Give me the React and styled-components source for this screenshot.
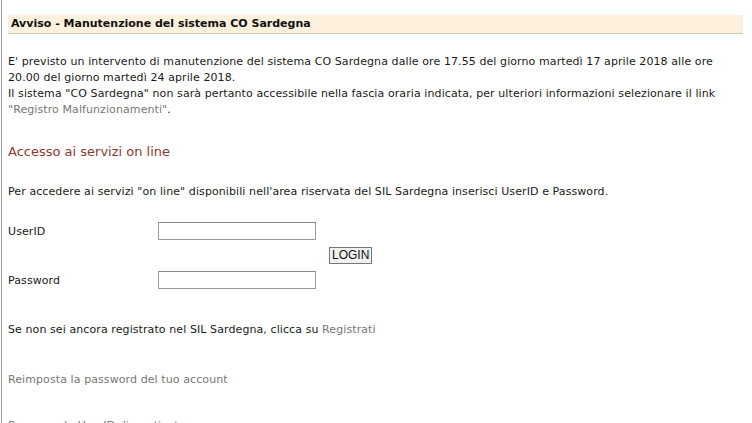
import React from 'react'
import styled, { createGlobalStyle } from 'styled-components'

const Global = createGlobalStyle`
	body{
		margin:0;
		background:#fff;
		font-family:"DejaVu Sans", Verdana, sans-serif;
		font-size:11px;
		color:#1a1a1a;
	}
`
const Pagina = styled.div`
	margin-left:1px;
	width:735px;
	height:423px;
	overflow:hidden;
	border-left:1px solid #9a9a9a;
	border-right:1px solid #b0b0b0;
	padding:15px 12px 0 6px;
	box-sizing:content-box;
	letter-spacing:0.09px;
`
const Avviso = styled.div`
	background:#fdf0dc;
	border-bottom:1px solid #c9cbb0;
	height:18px;
	line-height:18px;
	padding-left:3px;
	font-weight:bold;
	letter-spacing:0;
	color:#111;
`
const Testo = styled.p`
	margin:${p => p.top || 0}px 0 0 0;
	line-height:16px;
	color:${p => p.grigio ? '#777' : '#1a1a1a'};
`
const Link = styled.a`
	color:#777;
	text-decoration:none;
`
const Titolo = styled.h2`
	margin:26px 0 0 0;
	font-size:13px;
	font-weight:normal;
	line-height:16px;
	letter-spacing:0;
	color:#8c3a34;
`
const Form = styled.form`
	margin-top:22px;
	display:grid;
	grid-template-columns:150px 171px auto;
	grid-template-rows:18px 17px 18px;
	row-gap:7px;
	align-items:center;
`
const Etichetta = styled.label`
	grid-column:1;
	grid-row:${p => p.riga};
`
const Campo = styled.input`
	grid-column:2;
	grid-row:${p => p.riga};
	width:158px;
	height:18px;
	box-sizing:border-box;
	border:1px solid #999;
	border-top-color:#888;
	padding:1px 3px;
	font:inherit;
`
const Bottone = styled.button`
	grid-column:3;
	grid-row:2;
	justify-self:start;
	height:17px;
	padding:0 2px;
	font-family:"Liberation Sans", Arial, sans-serif;
	font-size:12px;
	line-height:15px;
	letter-spacing:0;
	color:#111;
	background:#f0f0f0;
	border:1px solid #777;
	border-radius:0;
`

export default () => (
	<Pagina>
		<Global/>
		<Avviso>Avviso - Manutenzione del sistema CO Sardegna</Avviso>
		<Testo top={20}>
			E' previsto un intervento di manutenzione del sistema CO Sardegna dalle ore 17.55 del giorno martedì 17 aprile 2018 alle ore 20.00 del giorno martedì 24 aprile 2018.<br/>
			Il sistema "CO Sardegna" non sarà pertanto accessibile nella fascia oraria indicata, per ulteriori informazioni selezionare il link <Link href="#">"Registro Malfunzionamenti"</Link>.
		</Testo>
		<Titolo>Accesso ai servizi on line</Titolo>
		<Testo top={24}>Per accedere ai servizi "on line" disponibili nell'area riservata del SIL Sardegna inserisci UserID e Password.</Testo>
		<Form onSubmit={e => e.preventDefault()}>
			<Etichetta riga={1}>UserID</Etichetta>
			<Campo riga={1} type="text"/>
			<Bottone type="submit">LOGIN</Bottone>
			<Etichetta riga={3}>Password</Etichetta>
			<Campo riga={3} type="password"/>
		</Form>
		<Testo top={33}>Se non sei ancora registrato nel SIL Sardegna, clicca su <Link href="#">Registrati</Link></Testo>
		<Testo top={34} grigio>Reimposta la password del tuo account</Testo>
		<Testo top={30} grigio>Recupera la UserID dimenticata</Testo>
	</Pagina>
)
